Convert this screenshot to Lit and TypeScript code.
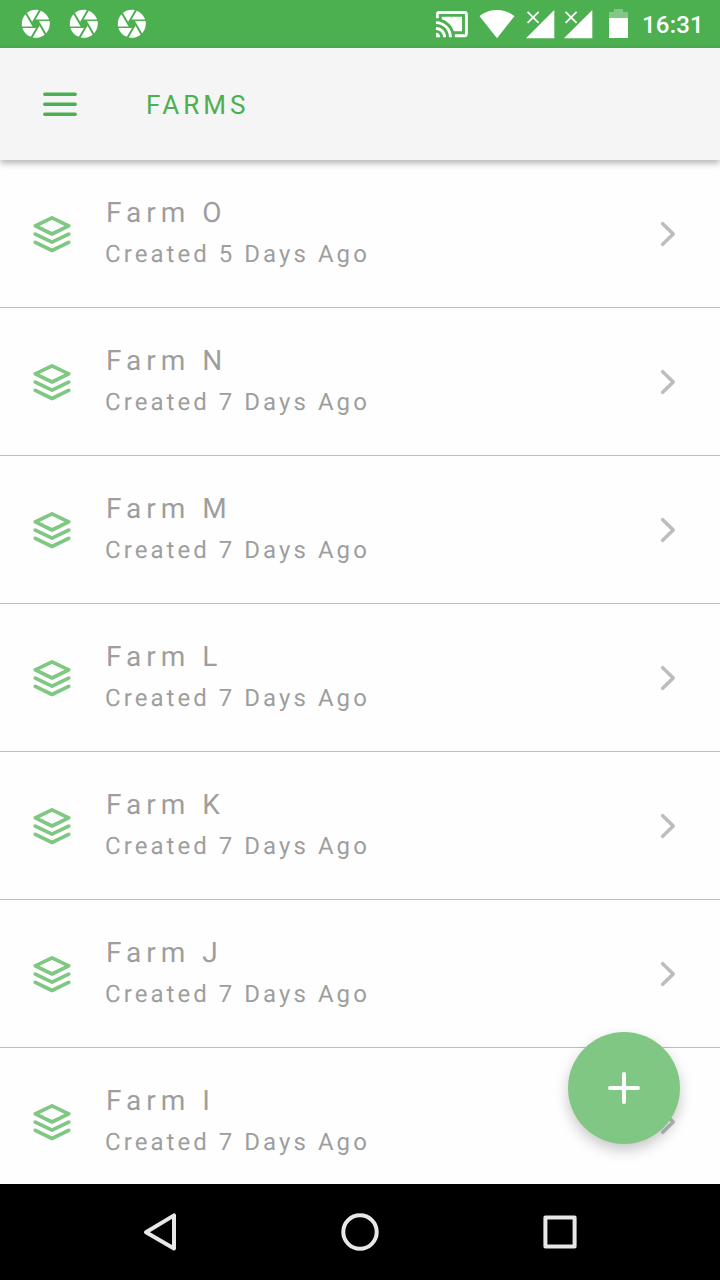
import { LitElement, html, css } from "lit";
import { customElement, property } from "lit/decorators.js";

@customElement("status-bar")
class StatusBar extends LitElement {
  static styles = css`
    :host { display: flex; height: 48px; background: #4caf50; color: #fff; }
    svg { display: block; flex: none; fill: currentColor; }
    .notes { display: flex; align-items: center; padding-left: 19.2px; gap: 14.4px; flex: 1; }
    .system { display: flex; }
    .time {
      width: 84px; box-sizing: border-box; padding-left: 6px;
      font: 500 24px/48px Roboto, sans-serif; padding-top: 1px; white-space: nowrap; letter-spacing: .2px;
    }
  `;
  render() {
    const aperture = html`<svg width="33.6" height="33.6" viewBox="0 0 24 24"><path d="M9.4 10.5l4.77-8.26C13.47 2.09 12.75 2 12 2c-2.4 0-4.6.85-6.32 2.25l3.66 6.35.06-.1zM21.54 9c-.92-2.92-3.15-5.26-6-6.34L11.88 9h9.66zm.26 1h-7.49l.29.5 4.76 8.25C21 16.97 22 14.61 22 12c0-.69-.07-1.35-.2-2zM8.54 12l-3.9-6.75C3.01 7.03 2 9.39 2 12c0 .69.07 1.35.2 2h7.49l-1.15-2zm-6.08 3c.92 2.92 3.15 5.26 6 6.34L12.12 15H2.46zm11.27 0l-3.9 6.76c.7.15 1.42.24 2.17.24 2.4 0 4.6-.85 6.32-2.25l-3.66-6.35-.93 1.6z"/></svg>`;
    const signal = html`<svg width="38" height="48" viewBox="0 0 38 48">
      <path d="M6 38.3L34.3 10v28.3z"/>
      <path d="M7.6 11.8l11 11M18.6 11.8l-11 11" stroke="currentColor" stroke-width="1.8" fill="none"/>
    </svg>`;
    return html`
      <div class="notes">${aperture}${aperture}${aperture}</div>
      <div class="system">
        <svg width="40" height="48" viewBox="0 0 40 48"><path transform="translate(.5 6.7) scale(1.45)" d="M1 18v3h3c0-1.66-1.34-3-3-3zm0-4v2c2.76 0 5 2.24 5 5h2c0-3.87-3.13-7-7-7zm18-7H5v1.63c3.96 1.28 7.09 4.41 8.37 8.37H19V7zM1 10v2c4.97 0 9 4.03 9 9h2c0-6.08-4.93-11-11-11zm20-7H3c-1.1 0-2 .9-2 2v3h2V5h18v14h-7v2h7c1.1 0 2-.9 2-2V5c0-1.1-.9-2-2-2z"/></svg>
        <svg width="46" height="48" viewBox="0 0 46 48"><path d="M23 38.3L5.6 16.2C6.6 15.3 12.800 10 23 10s16.400 5.300 17.400 6.200z"/></svg>
        ${signal}${signal}
        <svg width="40" height="48" viewBox="0 0 40 48">
          <path opacity=".3" d="M13 18v-6h5v-3h9v3h5v6z"/>
          <path d="M13 18h19v20H13z"/>
        </svg>
        <div class="time">16:31</div>
      </div>`;
  }
}

@customElement("farm-row")
class FarmRow extends LitElement {
  @property() name = "";
  @property() age = "";
  static styles = css`
    :host {
      display: flex; box-sizing: border-box; height: 148px; flex: none;
      border-bottom: 1px solid #bdbdbd; font-family: Roboto, sans-serif; color: #9e9e9e;
    }
    svg { display: block; flex: none; fill: none; stroke-linecap: round; stroke-linejoin: round; }
    .layers { margin: 50px 29px 0 28px; stroke: #81c784; stroke-width: 3.7; }
    .chevron { margin: 50px 28px 0 0; stroke: #bdbdbd; stroke-width: 3.6; }
    .text { flex: 1; padding-top: 32px; white-space: nowrap; text-rendering: geometricPrecision; }
    .name { font-size: 28px; line-height: 42px; letter-spacing: 5px; padding-left: 1px; }
    .age { font-size: 24px; line-height: 40px; letter-spacing: 3.05px; }
  `;
  render() {
    return html`
      <svg class="layers" width="48" height="48" viewBox="0 0 48 48">
        <path d="M24 7.800L40.700 15.900 24 24 7.300 15.900zM7.300 24.100L24 32.200l16.700-8.100M7.300 32.400L24 40.500l16.700-8.100"/>
      </svg>
      <div class="text">
        <div class="name">${this.name}</div>
        <div class="age">${this.age}</div>
      </div>
      <svg class="chevron" width="48" height="48" viewBox="0 0 48 48"><path d="M18.700 13.700L29.200 24 18.700 34.300"/></svg>`;
  }
}

@customElement("app-root")
class AppRoot extends LitElement {
  static styles = css`
    :host {
      display: flex; flex-direction: column; position: relative; width: 720px; height: 1280px;
      overflow: hidden; background: #fefefe; font-family: Roboto, sans-serif;
    }
    svg { display: block; }
    header {
      display: flex; align-items: center; height: 112px; flex: none; z-index: 1;
      background: #f5f5f5; color: #4caf50; box-shadow: 0 3px 7px rgba(0, 0, 0, .31);
      position: relative;
    }
    .menu { margin: 0 66px 0 40px; }
    .title { font-size: 26px; line-height: 40px; letter-spacing: 4px; padding-top: 2px; }
    main { flex: 1; min-height: 0; overflow: hidden; display: flex; flex-direction: column; }
    .fab {
      position: absolute; right: 40px; bottom: 136px; width: 112px; height: 112px;
      border-radius: 50%; background: #81c784; box-shadow: 0 6px 14px rgba(0, 0, 0, .22);
      display: grid; place-items: center;
    }
    nav {
      height: 96px; flex: none; background: #000; display: flex; justify-content: center;
      align-items: center; gap: 152px; position: relative;
    }
    nav svg { fill: none; stroke: #e8e8e8; stroke-width: 4; stroke-linejoin: round; }
  `;
  private farms = ["O", "N", "M", "L", "K", "J", "I"];
  render() {
    return html`
      <status-bar></status-bar>
      <header>
        <svg class="menu" width="40" height="40" viewBox="0 0 40 40">
          <path d="M4.800 10.200h30.400M4.800 20.200h30.400M4.800 30.200h30.400" stroke="currentColor" stroke-width="3.500" stroke-linecap="round"/>
        </svg>
        <div class="title">FARMS</div>
      </header>
      <main>
        ${this.farms.map((f, i) => html`<farm-row name="Farm ${f}" age="Created ${i ? 7 : 5} Days Ago"></farm-row>`)}
      </main>
      <div class="fab">
        <svg width="40" height="40" viewBox="0 0 40 40"><path d="M6 20h28M20 6v28" stroke="#fff" stroke-width="4" stroke-linecap="round"/></svg>
      </div>
      <nav>
        <svg width="48" height="48" viewBox="0 0 48 48"><path d="M38 7.400v33.200L10 24.200z"/></svg>
        <svg width="48" height="48" viewBox="0 0 48 48"><circle cx="24" cy="24" r="16.700"/></svg>
        <svg width="48" height="48" viewBox="0 0 48 48"><path d="M9.400 9.400h29.200v29.200H9.400z"/></svg>
      </nav>`;
  }
}
